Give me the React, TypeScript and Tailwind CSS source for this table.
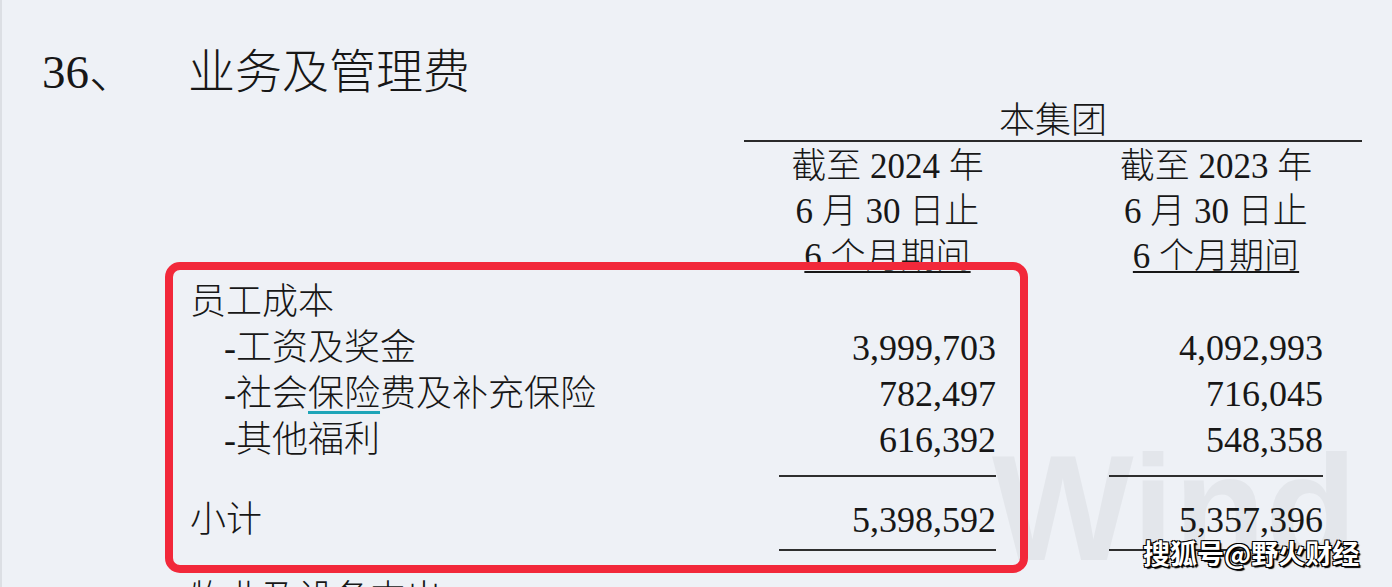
export default function App() {
  const rows = [
    { label: "-工资及奖金", a: "3,999,703", b: "4,092,993" },
    { label: "-社会保险费及补充保险", a: "782,497", b: "716,045" },
    { label: "-其他福利", a: "616,392", b: "548,358" },
  ];

  return (
    <div className="relative h-[587px] w-[1392px] overflow-hidden border-l-2 border-[#dcdfe4] bg-[#eef1f6] font-['Liberation_Serif','Noto_Sans_CJK_SC',serif] font-light text-[#171717]">
      {/* Wind watermark */}
      <div className="absolute left-[990px] top-[433px] font-['Liberation_Sans',sans-serif] text-[150px] font-bold leading-none text-[#e3e6eb]">
        Wind
      </div>

      {/* Title */}
      <div className="relative mt-[42px] flex h-[60px] items-center pl-[40px] text-[47px] leading-[60px]">
        <span className="w-[146px]">36、</span>
        <span>业务及管理费</span>
      </div>

      <div className="relative pl-[185px]">
        {/* Group header */}
        <div className="ml-[557px] w-[618px] border-b-2 border-[#2a2a2a] text-center text-[36px] leading-[38px]">
          本集团
        </div>

        <div className="grid grid-cols-[592px_217px_113px_214px] pt-[2px] text-center text-[35px] leading-[45px]">
          <div />
          <div>
            截至 2024 年
            <br />6 月 30 日止
            <br />
            <span className="underline decoration-2 underline-offset-[3px]">6 个月期间</span>
          </div>
          <div />
          <div>
            截至 2023 年
            <br />6 月 30 日止
            <br />
            <span className="underline decoration-2 underline-offset-[3px]">6 个月期间</span>
          </div>
        </div>

        {/* Body */}
        <div className="grid grid-cols-[592px_217px_113px_214px] text-[36px] leading-[46px]">
          <div className="pl-[3px]">员工成本</div>
          <div />
          <div />
          <div />

          {rows.map((r) => (
            <div key={r.label} className="contents">
              <div className="pl-[37px]">
                {r.label === "-社会保险费及补充保险" ? (
                  <>
                    -社会
                    <span className="underline decoration-[#1ea5b8] decoration-[3px] underline-offset-[5px]">保险</span>
                    费及补充保险
                  </>
                ) : (
                  r.label
                )}
              </div>
              <div className="text-right">{r.a}</div>
              <div />
              <div className="text-right">{r.b}</div>
            </div>
          ))}

          <div className="h-[14px]" />
          <div className="h-[14px] border-b-2 border-[#2e2e2e]" />
          <div className="h-[14px]" />
          <div className="h-[14px] border-b-2 border-[#2e2e2e]" />

          <div className="mt-[20px] pl-[3px]">小计</div>
          <div className="mt-[20px] text-right">5,398,592</div>
          <div />
          <div className="mt-[20px] text-right">5,357,396</div>

          <div className="h-[8px]" />
          <div className="h-[8px] border-b-2 border-[#2e2e2e]" />
          <div className="h-[8px]" />
          <div className="h-[8px] border-b-2 border-[#2e2e2e]" />

          <div className="mt-[25px] pl-[3px]">物业及设备支出</div>
        </div>
      </div>

      {/* Red highlight box */}
      <div className="absolute left-[163px] top-[262px] h-[311px] w-[863px] rounded-[15px] border-[8px] border-[#f2283a]" />

      {/* Sohu watermark */}
      <div className="absolute left-[1141px] top-[536px] font-['Noto_Sans_CJK_SC',sans-serif] text-[27px] font-bold leading-[34px] text-white [text-shadow:1px_1px_0_#000,-1px_-1px_0_#000,1px_-1px_0_#000,-1px_1px_0_#000,2px_2px_1px_#000]">
        搜狐号@野火财经
      </div>
    </div>
  );
}
